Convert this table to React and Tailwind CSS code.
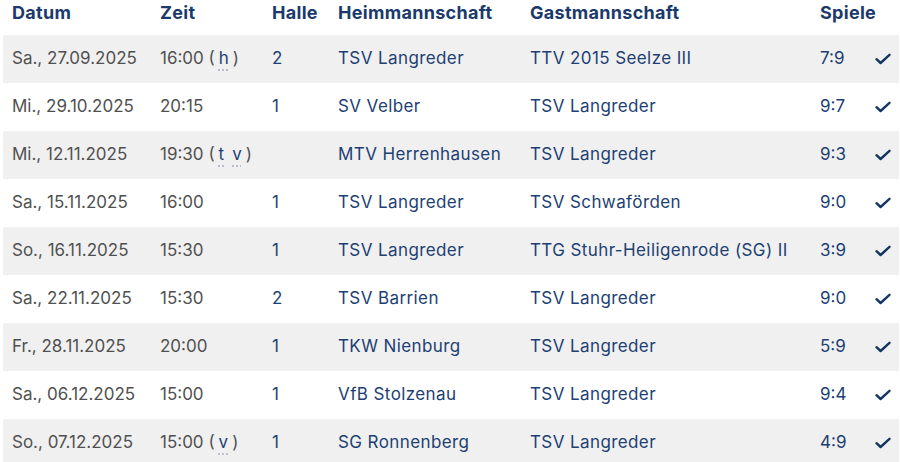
const games = [
  { date: 'Sa., 27.09.2025', time: '16:00', tags: ['h'], hall: '2', home: 'TSV Langreder', guest: 'TTV 2015 Seelze III', result: '7:9' },
  { date: 'Mi., 29.10.2025', time: '20:15', tags: [], hall: '1', home: 'SV Velber', guest: 'TSV Langreder', result: '9:7' },
  { date: 'Mi., 12.11.2025', time: '19:30', tags: ['t', 'v'], hall: '', home: 'MTV Herrenhausen', guest: 'TSV Langreder', result: '9:3' },
  { date: 'Sa., 15.11.2025', time: '16:00', tags: [], hall: '1', home: 'TSV Langreder', guest: 'TSV Schwaförden', result: '9:0' },
  { date: 'So., 16.11.2025', time: '15:30', tags: [], hall: '1', home: 'TSV Langreder', guest: 'TTG Stuhr-Heiligenrode (SG) II', result: '3:9' },
  { date: 'Sa., 22.11.2025', time: '15:30', tags: [], hall: '2', home: 'TSV Barrien', guest: 'TSV Langreder', result: '9:0' },
  { date: 'Fr., 28.11.2025', time: '20:00', tags: [], hall: '1', home: 'TKW Nienburg', guest: 'TSV Langreder', result: '5:9' },
  { date: 'Sa., 06.12.2025', time: '15:00', tags: [], hall: '1', home: 'VfB Stolzenau', guest: 'TSV Langreder', result: '9:4' },
  { date: 'So., 07.12.2025', time: '15:00', tags: ['v'], hall: '1', home: 'SG Ronnenberg', guest: 'TSV Langreder', result: '4:9' },
];

const cols = 'grid grid-cols-[148px_112px_66px_192px_290px_56px_1fr]';

const CheckMark = () => (
  <svg width="16" height="12" viewBox="0 0 16 12" fill="none" className="ml-[-1px]">
    <path d="M1.5 6.2 L5.6 10 L14.5 1.8" stroke="currentColor" strokeWidth="2.4" strokeLinecap="round" strokeLinejoin="round" />
  </svg>
);

export default function App() {
  return (
    <div className="w-[900px] h-[462px] overflow-hidden bg-white pl-[3px] pr-[1px] font-['Inter',sans-serif] text-[17px]">
      {/* Header */}
      <div className={`${cols} h-[35px] items-start text-[18px] leading-[26px] font-bold tracking-[0.3px] text-[#1b3a6b]`}>
        <div className="pl-[9px]">Datum</div>
        <div className="pl-[9px]">Zeit</div>
        <div className="pl-[9px]">Halle</div>
        <div className="pl-[9px]">Heimmannschaft</div>
        <div className="pl-[9px]">Gastmannschaft</div>
        <div className="pl-[9px]">Spiele</div>
        <div />
      </div>

      {/* Rows */}
      {games.map((g, idx) => (
        <div
          key={idx}
          className={`${cols} h-[48px] items-center ${idx % 2 === 0 ? 'bg-[#f0f0f0]' : 'bg-white'}`}
        >
          <div className="pl-[9px] text-[#505050]">{g.date}</div>
          <div className="pl-[9px] text-[#505050] whitespace-nowrap">
            {g.time}
            {g.tags.length > 0 && (
              <span>
                {' ('}
                {g.tags.map((t) => (
                  <span key={t} className="mx-[4px] text-[#1d3f73] underline decoration-dotted decoration-[#a9b3c2] underline-offset-[5px]">
                    {t}
                  </span>
                ))}
                {')'}
              </span>
            )}
          </div>
          <div className="pl-[9px] text-[#1d3f73]">{g.hall}</div>
          <div className="pl-[9px] text-[#1d3f73] tracking-[0.4px] whitespace-nowrap">{g.home}</div>
          <div className="pl-[9px] text-[#1d3f73] tracking-[0.4px] whitespace-nowrap">{g.guest}</div>
          <div className="pl-[9px] text-[#1d3f73]">{g.result}</div>
          <div className="pl-[9px] flex items-center text-[#173666]">
            <CheckMark />
          </div>
        </div>
      ))}
    </div>
  );
}
